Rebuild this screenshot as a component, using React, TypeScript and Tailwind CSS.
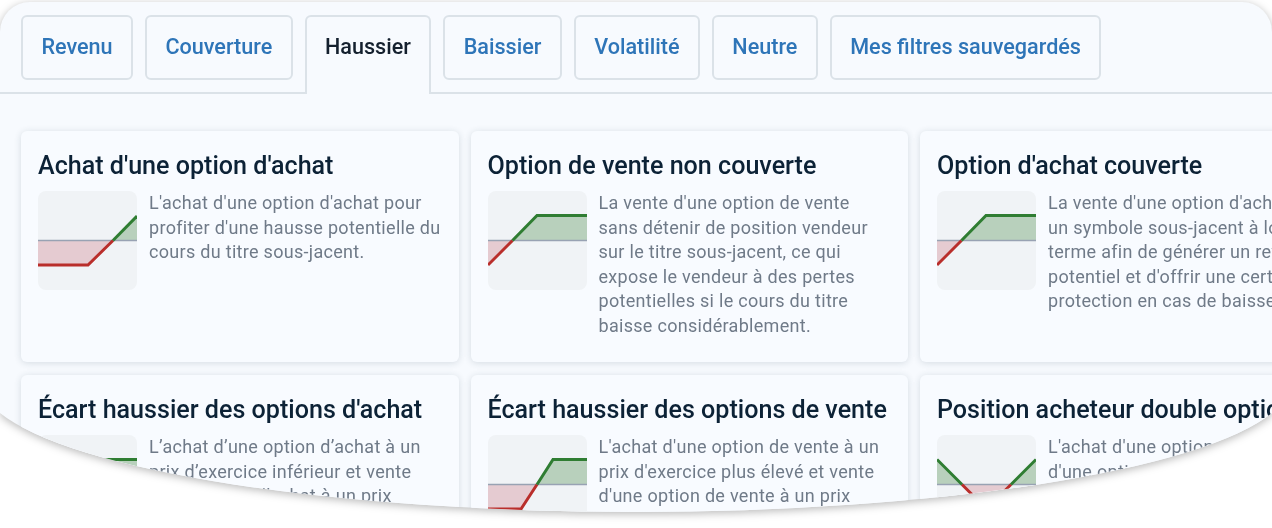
const tabs = ["Revenu", "Couverture", "Haussier", "Baissier", "Volatilité", "Neutre", "Mes filtres sauvegardés"];

const GREEN = "#2f7d32";
const RED = "#b92e2b";
const GFILL = "#b8d0bc";
const RFILL = "#e5cbd1";
const AXIS = "#98a2b3";

type ChartKind = "call" | "put" | "spread" | "straddle";

function Chart({ kind }: { kind: ChartKind }) {
  return (
    <svg viewBox="0 0 99 99" className="h-[99px] w-[99px] shrink-0 rounded-lg bg-[#f0f3f6]">
      {kind === "call" && (
        <>
          <path d="M0 49.5H75L50 74H0Z" fill={RFILL} />
          <path d="M75 49.5L99 25V49.5Z" fill={GFILL} />
          <line x1="0" y1="49.5" x2="99" y2="49.5" stroke={AXIS} strokeWidth="1.3" />
          <path d="M0 74H50L75 49.5" fill="none" stroke={RED} strokeWidth="3" />
          <path d="M75 49.5L99 25" fill="none" stroke={GREEN} strokeWidth="3" />
        </>
      )}
      {kind === "put" && (
        <>
          <path d="M0 49.5H24.5L0 74Z" fill={RFILL} />
          <path d="M24.5 49.5L49 24.5H99V49.5Z" fill={GFILL} />
          <line x1="0" y1="49.5" x2="99" y2="49.5" stroke={AXIS} strokeWidth="1.3" />
          <path d="M0 74L24.5 49.5" fill="none" stroke={RED} strokeWidth="3" />
          <path d="M24.5 49.5L49 24.5H99" fill="none" stroke={GREEN} strokeWidth="3" />
        </>
      )}
      {kind === "spread" && (
        <>
          <path d="M0 49.5H49L33 74H0Z" fill={RFILL} />
          <path d="M49 49.5L65 24.5H99V49.5Z" fill={GFILL} />
          <line x1="0" y1="49.5" x2="99" y2="49.5" stroke={AXIS} strokeWidth="1.3" />
          <path d="M0 74H33L49 49.5" fill="none" stroke={RED} strokeWidth="3" />
          <path d="M49 49.5L65 24.5H99" fill="none" stroke={GREEN} strokeWidth="3" />
        </>
      )}
      {kind === "straddle" && (
        <>
          <path d="M0 24.5L25 49.5H0Z" fill={GFILL} />
          <path d="M99 24.5L74 49.5H99Z" fill={GFILL} />
          <path d="M25 49.5H74L49.5 74Z" fill={RFILL} />
          <line x1="0" y1="49.5" x2="99" y2="49.5" stroke={AXIS} strokeWidth="1.3" />
          <path d="M25 49.5L49.5 74L74 49.5" fill="none" stroke={RED} strokeWidth="3" />
          <path d="M0 24.5L25 49.5M74 49.5L99 24.5" fill="none" stroke={GREEN} strokeWidth="3" />
        </>
      )}
    </svg>
  );
}

const cards: { title: string; kind: ChartKind; text: string }[] = [
  { title: "Achat d'une option d'achat", kind: "call", text: "L'achat d'une option d'achat pour profiter d'une hausse potentielle du cours du titre sous-jacent." },
  { title: "Option de vente non couverte", kind: "put", text: "La vente d'une option de vente sans détenir de position vendeur sur le titre sous-jacent, ce qui expose le vendeur à des pertes potentielles si le cours du titre baisse considérablement." },
  { title: "Option d'achat couverte", kind: "put", text: "La vente d'une option d'achat sur un symbole sous-jacent à long terme afin de générer un revenu potentiel et d'offrir une certaine protection en cas de baisse." },
  { title: "Écart haussier des options d'achat", kind: "spread", text: "L’achat d’une option d’achat à un prix d’exercice inférieur et vente d’une option d’achat à un prix d’exercice supérieur." },
  { title: "Écart haussier des options de vente", kind: "spread", text: "L'achat d'une option de vente à un prix d'exercice plus élevé et vente d'une option de vente à un prix d'exercice inférieur." },
  { title: "Position acheteur double option", kind: "straddle", text: "L'achat d'une option d'achat et d'une option de vente au même prix d'exercice." },
];

export default function App() {
  return (
    <div className="h-[528px] w-[1272px] overflow-hidden bg-white pt-[2px] font-['Roboto',sans-serif]">
      <div className="drop-shadow-[0_2px_4px_rgba(0,0,0,0.28)]">
        <div className="h-[511px] w-[1272px] overflow-hidden bg-[#f7fafe] [clip-path:path('M0_30A30_30_0_0_1_30_0H1242A30_30_0_0_1_1272_30V411A655_130_0_0_1_0_411Z')]">
          <div className="flex h-[92px] items-start gap-3 border-b-2 border-[#dbe2e8] pl-[21px] pt-[13px]">
            {tabs.map((t) =>
              t === "Haussier" ? (
                <div
                  key={t}
                  className="flex h-[79px] items-start rounded-t-md border-2 border-b-0 border-[#dbe2e8] bg-[#f7fafe] px-[18.4px] pt-[17px] text-[21.6px] font-medium leading-[26px] text-[#14202e]"
                >
                  {t}
                </div>
              ) : (
                <div
                  key={t}
                  className="flex h-[65px] items-start rounded-md border-2 border-[#dbe2e8] px-[18.4px] pt-[17px] text-[21.6px] font-medium leading-[26px] text-[#2e75b8]"
                >
                  {t}
                </div>
              )
            )}
          </div>
          <div className="grid grid-cols-[437.5px_437.5px_437.5px] auto-rows-[231px] gap-x-3 gap-y-[13px] pl-[21px] pt-[37px]">
            {cards.map((c) => (
              <div key={c.title} className="rounded-md bg-[#f8fbff] px-[17px] pt-[17px] shadow-[0_1px_7px_rgba(40,60,80,0.16)]">
                <h3 className="whitespace-nowrap text-[25.1px] font-medium leading-[36px] text-[#0c2236]">
                  {c.title}
                </h3>
                <div className="mt-[7px] flex gap-3">
                  <Chart kind={c.kind} />
                  <p className="w-[294px] shrink-0 text-[18px] leading-[24.6px] tracking-[0.3px] text-[#6f7a88]">
                    {c.text}
                  </p>
                </div>
              </div>
            ))}
          </div>
        </div>
      </div>
    </div>
  );
}
